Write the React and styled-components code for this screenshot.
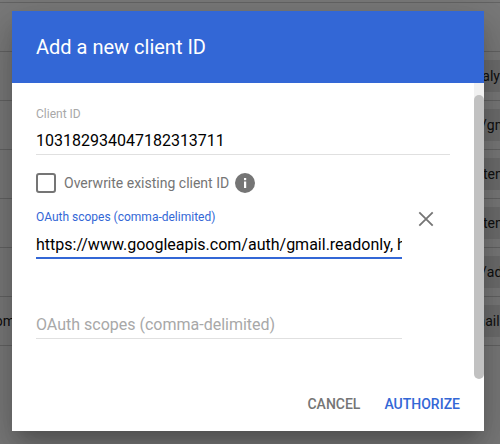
import * as React from 'react';
import styled, { createGlobalStyle } from 'styled-components';

const GlobalStyle = createGlobalStyle`
    html, body {
        margin: 0;
        padding: 0;
        overflow: hidden;
        font-family: Roboto, "Liberation Sans", sans-serif;
    }
`;

const Page = styled.div`
    position: relative;
    width: 500px;
    height: 444px;
    overflow: hidden;
    background: #f5f5f5;
`;

const TopEdge = styled.div`
    height: 2px;
    border-bottom: 1px solid #c8c8c8;
`;

const Row = styled.div`
    display: flex;
    align-items: center;
    height: 48px;
    border-bottom: 1px solid #c8c8c8;
    font-size: 14px;
    color: #212121;

    &:last-of-type {
        border-bottom: 0;
    }
`;

const RowName = styled.div`
    flex: 0 0 15px;
    display: flex;
    justify-content: flex-end;
    overflow: hidden;
    white-space: nowrap;
`;

const Chip = styled.div`
    margin-left: ${props => props.$indent}px;
    height: 32px;
    padding: 0 12px;
    display: flex;
    align-items: center;
    background: #dcdcdc;
    white-space: nowrap;
`;

const Scrim = styled.div`
    position: absolute;
    inset: 0;
    padding: 11px 16px 13px 12px;
    background: rgba(0, 0, 0, 0.5);
`;

const Dialog = styled.div`
    position: relative;
    display: flex;
    flex-direction: column;
    height: 420px;
    background: #fff;
    box-shadow: 0 11px 15px -7px rgba(0, 0, 0, 0.2), 0 24px 38px 3px rgba(0, 0, 0, 0.14), 0 9px 46px 8px rgba(0, 0, 0, 0.12);
`;

const Header = styled.div`
    flex: 0 0 72px;
    display: flex;
    align-items: center;
    padding: 0 24px;
    background: #3367d6;
    color: #fff;
    font-size: 20px;
    font-weight: 400;
`;

const Body = styled.div`
    flex: 1;
    padding: 24px 34px 0 24px;
`;

const FieldLabel = styled.label`
    display: block;
    height: 14px;
    line-height: 14px;
    font-size: 12px;
    color: ${props => (props.$focused ? '#3367d6' : '#a8a8a8')};
`;

const FieldInput = styled.input`
    display: block;
    width: 100%;
    box-sizing: border-box;
    height: ${props => (props.$focused ? 35 : 34)}px;
    margin: 0;
    padding: ${props => (props.$focused ? 8 : 6)}px 0 0;
    border: 0;
    border-bottom: ${props => (props.$focused ? '2px solid #3367d6' : '1px solid #e0e0e0')};
    outline: 0;
    background: none;
    font-family: inherit;
    font-size: 16px;
    color: #000;

    &::placeholder {
        color: #a8a8a8;
        opacity: 1;
    }
`;

const ClientField = styled.div`
    padding-bottom: 18px;
`;

const CheckRow = styled.div`
    display: flex;
    align-items: center;
    height: 20px;
    margin-bottom: 17px;
    font-size: 14px;
    color: #757575;
`;

const CheckBox = styled.span`
    flex: 0 0 20px;
    box-sizing: border-box;
    height: 20px;
    margin-right: 8px;
    border: 2px solid #757575;
    border-radius: 3px;
`;

const InfoIcon = styled.span`
    display: flex;
    margin-left: 6px;
`;

const ScopeRow = styled.div`
    display: flex;
    align-items: flex-start;
    margin-bottom: ${props => props.$gap}px;
`;

const ScopeField = styled.div`
    flex: 0 0 366px;
`;

const RemoveButton = styled.span`
    display: flex;
    margin: -3px 0 0 12px;
`;

const Actions = styled.div`
    flex: 0 0 36px;
    display: flex;
    justify-content: flex-end;
    gap: 24px;
    padding-right: 24px;
`;

const ActionButton = styled.button`
    height: 18px;
    padding: 0;
    border: 0;
    background: none;
    font-family: inherit;
    font-size: 14px;
    font-weight: 500;
    text-transform: uppercase;
    color: ${props => (props.$primary ? '#3367d6' : '#757575')};
`;

const ScrollTrack = styled.div`
    position: absolute;
    top: 72px;
    right: 0;
    width: 10px;
    height: 296px;
    background: linear-gradient(#f1f1f1 16px, #fff 16px);
`;

const ScrollThumb = styled.div`
    height: 284px;
    margin-top: 12px;
    border-radius: 5px;
    background: #c1c1c1;
`;

const rows = [
    {},
    { indent: 455, text: 'analytics' },
    { indent: 469, text: '/gmail' },
    { indent: 448, text: 'content' },
    { indent: 448, text: 'content' },
    { indent: 469, text: '/admin' },
    { name: 'user@example.com', indent: 453, text: 'gmail.send' }
];

export default function App() {
    return (
        <Page>
            <GlobalStyle />
            <TopEdge />
            {rows.map((row, i) => (
                <Row key={i}>
                    <RowName>{row.name}</RowName>
                    {row.text && <Chip $indent={row.indent - 15}>{row.text}</Chip>}
                </Row>
            ))}
            <Scrim>
                <Dialog>
                    <Header>Add a new client ID</Header>
                    <Body>
                        <ClientField>
                            <FieldLabel>Client ID</FieldLabel>
                            <FieldInput readOnly value="103182934047182313711" />
                        </ClientField>
                        <CheckRow>
                            <CheckBox />
                            Overwrite existing client ID
                            <InfoIcon>
                                <svg width="20" height="20" viewBox="0 0 20 20">
                                    <circle cx="10" cy="10" r="10" fill="#757575" />
                                    <rect x="9" y="8.5" width="2.2" height="6.5" fill="#fff" />
                                    <rect x="9" y="5" width="2.2" height="2.2" fill="#fff" />
                                </svg>
                            </InfoIcon>
                        </CheckRow>
                        <ScopeRow $gap={46}>
                            <ScopeField>
                                <FieldLabel $focused>OAuth scopes (comma-delimited)</FieldLabel>
                                <FieldInput
                                    $focused
                                    readOnly
                                    value="https://www.googleapis.com/auth/gmail.readonly, https://www.googleapis.com/auth/gmail.send"
                                />
                            </ScopeField>
                            <RemoveButton>
                                <svg width="24" height="24" viewBox="0 0 24 24">
                                    <path d="M5.3 5.3l13.4 13.4M18.7 5.3L5.3 18.7" stroke="#757575" strokeWidth="1.8" fill="none" />
                                </svg>
                            </RemoveButton>
                        </ScopeRow>
                        <ScopeRow $gap={0}>
                            <ScopeField>
                                <FieldInput placeholder="OAuth scopes (comma-delimited)" />
                            </ScopeField>
                        </ScopeRow>
                    </Body>
                    <Actions>
                        <ActionButton>Cancel</ActionButton>
                        <ActionButton $primary>Authorize</ActionButton>
                    </Actions>
                    <ScrollTrack>
                        <ScrollThumb />
                    </ScrollTrack>
                </Dialog>
            </Scrim>
        </Page>
    );
}
